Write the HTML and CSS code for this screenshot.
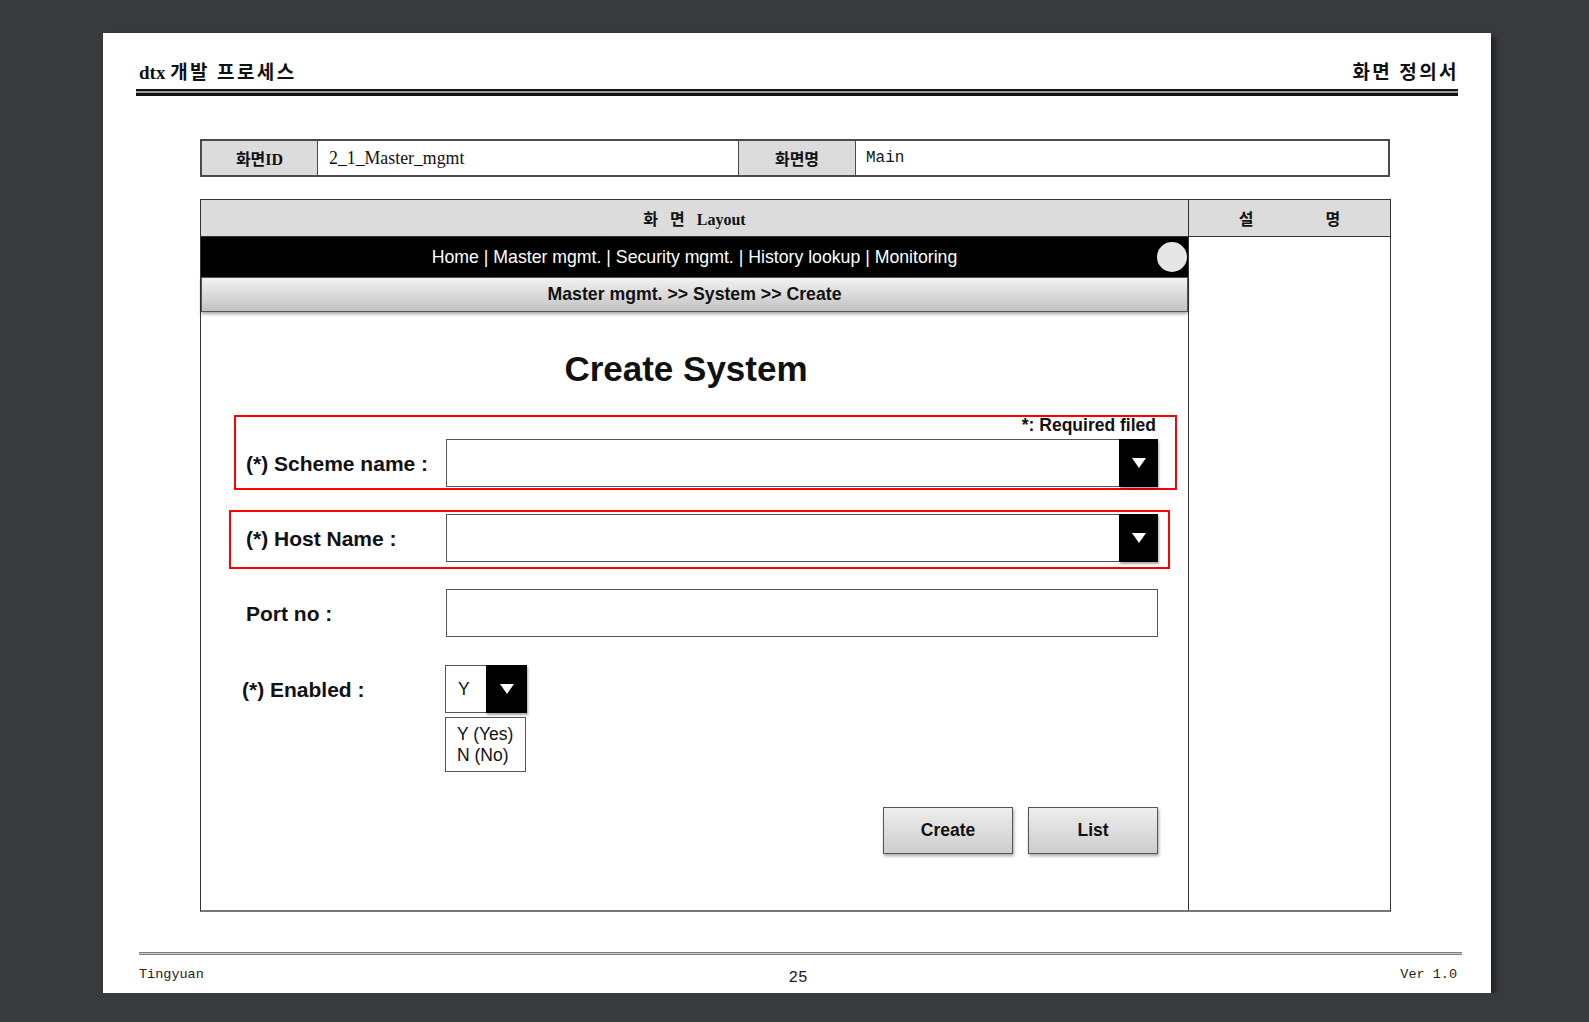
FILE: index.html
```html
<!DOCTYPE html>
<html lang="ko">
<head>
<meta charset="utf-8">
<title>화면 정의서</title>
<link rel="stylesheet" href="styles.css">
</head>
<body>
<div class="page">
  <header class="doc-head">
    <div class="doc-head-row">
      <span>dtx <span class="ko">개발 프로세스</span></span>
      <span class="ko ko-r">화면 정의서</span>
    </div>
    <div class="doc-rule"></div>
  </header>

  <div class="idtable">
    <div class="idcell label">화면ID</div>
    <div class="idcell value serif">2_1_Master_mgmt</div>
    <div class="idcell label">화면명</div>
    <div class="idcell value mono">Main</div>
  </div>

  <div class="layout">
    <div class="lhead lhead-left">화 면 Layout</div>
    <div class="lhead rhead"><span>설</span><span>명</span></div>
    <div class="mock">
      <div class="nav">
        <span></span>
        <span class="nav-links">Home | Master mgmt. | Security mgmt. | History lookup | Monitoring</span>
        <span class="nav-dot"></span>
      </div>
      <div class="crumb">Master mgmt. &gt;&gt; System &gt;&gt; Create</div>
      <h1 class="title">Create System</h1>

      <div class="mark mark-1">
        <div class="note">*: Required filed</div>
        <div class="row">
          <span class="lbl">(*) Scheme name :</span>
          <div class="select"><span class="field"></span><span class="sel-btn"><i class="tri"></i></span></div>
        </div>
      </div>

      <div class="mark mark-2">
        <div class="row">
          <span class="lbl">(*) Host Name :</span>
          <div class="select"><span class="field"></span><span class="sel-btn"><i class="tri"></i></span></div>
        </div>
      </div>

      <div class="row port-row">
        <span class="lbl">Port no :</span>
        <div class="input"></div>
      </div>

      <div class="row enabled-row">
        <span class="lbl lbl-en">(*) Enabled :</span>
        <div class="select small"><span class="field">Y</span><span class="sel-btn"><i class="tri"></i></span></div>
      </div>
      <div class="optlist">
        <div>Y (Yes)</div>
        <div>N (No)</div>
      </div>

      <div class="actions">
        <button class="btn">Create</button>
        <button class="btn">List</button>
      </div>
    </div>
    <div class="side"></div>
  </div>

  <div class="foot-rule"></div>
  <footer class="foot">
    <span>Tingyuan</span>
    <span class="pageno">25</span>
    <span class="ver">Ver 1.0</span>
  </footer>
</div>
</body>
</html>
```

FILE: styles.css
```css
* { box-sizing: border-box; }

body {
  margin: 0;
  background: #393a3e;
  font-family: "Liberation Sans", Arial, sans-serif;
  color: #111;
}

.page {
  width: 1388px;
  height: 960px;
  margin: 33px 0 0 103px;
  background: #fff;
  box-shadow: 4px 4px 6px rgba(0, 0, 0, 0.45);
  overflow: hidden;
}

/* document header */
.doc-head {
  margin: 0 33px;
  padding-top: 24px;
}
.doc-head-row {
  display: flex;
  justify-content: space-between;
  padding: 0 1px 0 3px;
  height: 24px;
  line-height: 24px;
  margin-bottom: 8px;
  font: bold 19px "Liberation Serif", "Noto Sans CJK KR", serif;
  color: #111;
}
.ko { letter-spacing: 2.4px; }
.ko-r { margin-right: -2px; }
.doc-rule {
  height: 7px;
  border-top: 2px solid #111;
  border-bottom: 3px solid #111;
  background: #9a9a9a;
}

/* id table */
.idtable {
  margin: 43px 0 0 97px;
  width: 1190px;
  height: 38px;
  display: grid;
  grid-template-columns: 115px 421px 117px 533px;
  border: 2px solid #4a4a4a;
}
.idcell {
  display: flex;
  align-items: center;
  border-left: 1px solid #4a4a4a;
}
.idcell:first-child { border-left: 0; }
.idcell.label {
  background: #dcdcdc;
  justify-content: center;
  font: bold 16px "Liberation Serif", "Noto Sans CJK KR", serif;
}
.idcell.serif {
  font-family: "Liberation Serif", serif;
  font-size: 17.8px;
  padding-left: 11px;
}
.idcell.mono {
  font-family: "Liberation Mono", monospace;
  font-size: 16px;
  padding-left: 10px;
}

/* layout table */
.layout {
  margin: 22px 0 0 97px;
  width: 1191px;
  border: 1px solid #333;
  border-bottom: 2px solid #777;
  display: grid;
  grid-template-columns: 988px 201px;
  grid-template-rows: 37px 673px;
}
.lhead {
  background: #dcdcdc;
  border-bottom: 1px solid #333;
  display: flex;
  align-items: center;
  justify-content: center;
  font: bold 16px "Liberation Serif", "Noto Sans CJK KR", serif;
  word-spacing: 8px;
}
.lhead-left { border-right: 1px solid #333; }
.rhead { gap: 72px; }
.mock { border-right: 1px solid #333; }

.nav {
  height: 40px;
  background: #000;
  color: #fff;
  display: grid;
  grid-template-columns: 1fr auto 1fr;
  align-items: center;
  font-size: 17.7px;
}
.nav-dot {
  justify-self: end;
  width: 30px;
  height: 30px;
  border-radius: 50%;
  background: #e6e6e6;
  margin-right: 1px;
}
.crumb {
  height: 35px;
  border: 1px solid #555;
  background: linear-gradient(#f2f2f2, #c2c2c2);
  box-shadow: 0 2px 3px rgba(0, 0, 0, 0.35);
  display: flex;
  align-items: center;
  justify-content: center;
  font-weight: bold;
  font-size: 17.7px;
}
.title {
  margin: 36px 0 0;
  padding-right: 17px;
  font-size: 35px;
  line-height: 42px;
  text-align: center;
  font-weight: bold;
}

.mark { border: 2px solid #f00; }
.mark-1 {
  margin: 25px 11px 0 33px;
  padding: 0 17px 1px 10px;
}
.mark-2 {
  margin: 20px 18px 0 28px;
  padding: 2px 10px 5px 15px;
}
.note {
  text-align: right;
  font-weight: bold;
  font-size: 17.5px;
  line-height: 16px;
  margin: 0 2px 6px 0;
}
.row {
  display: flex;
  align-items: center;
}
.lbl {
  width: 200px;
  flex: none;
  font-weight: bold;
  font-size: 21px;
  padding-top: 2px;
}
.select {
  flex: 1;
  height: 48px;
  display: flex;
}
.field {
  flex: 1;
  border: 1px solid #555;
  border-right: 0;
  display: flex;
  align-items: center;
  padding-left: 12px;
  font-size: 17.5px;
}
.sel-btn {
  width: 39px;
  background: #000;
  display: flex;
  align-items: center;
  justify-content: center;
  box-shadow: 1px 2px 2px rgba(0, 0, 0, 0.35);
}
.tri {
  width: 0;
  height: 0;
  border-left: 7px solid transparent;
  border-right: 7px solid transparent;
  border-top: 10px solid #fff;
}
.port-row { margin: 20px 30px 0 45px; }
.input {
  flex: 1;
  height: 48px;
  border: 1px solid #555;
}
.enabled-row { margin: 28px 0 0 41px; }
.lbl-en { width: 203px; }
.select.small {
  flex: none;
  width: 82px;
}
.select.small .sel-btn { width: 41px; }
.optlist {
  margin: 4px 0 0 244px;
  width: 81px;
  height: 55px;
  border: 1px solid #555;
  padding: 6px 0 0 11px;
  font-size: 17.5px;
  line-height: 21px;
}
.actions {
  display: flex;
  justify-content: flex-end;
  gap: 15px;
  margin: 35px 30px 0 0;
}
.btn {
  width: 130px;
  height: 47px;
  border: 1px solid #555;
  background: linear-gradient(#ededed, #cdcdcd);
  box-shadow: 1px 2px 3px rgba(0, 0, 0, 0.35);
  font: bold 17.5px "Liberation Sans", Arial, sans-serif;
  color: #111;
  padding: 0;
}

/* footer */
.foot-rule {
  margin: 40px 29px 0 36px;
  height: 3px;
  border-top: 1px solid #808080;
  border-bottom: 1px solid #808080;
  background: #c8c8c8;
}
.foot {
  margin: 7px 34px 0 36px;
  display: grid;
  grid-template-columns: 1fr auto 1fr;
  align-items: center;
  font-family: "Liberation Mono", monospace;
  font-size: 13.5px;
  line-height: 20px;
  color: #222;
}
.pageno {
  font-size: 16px;
  padding-top: 6px;
}
.ver { text-align: right; }
```
